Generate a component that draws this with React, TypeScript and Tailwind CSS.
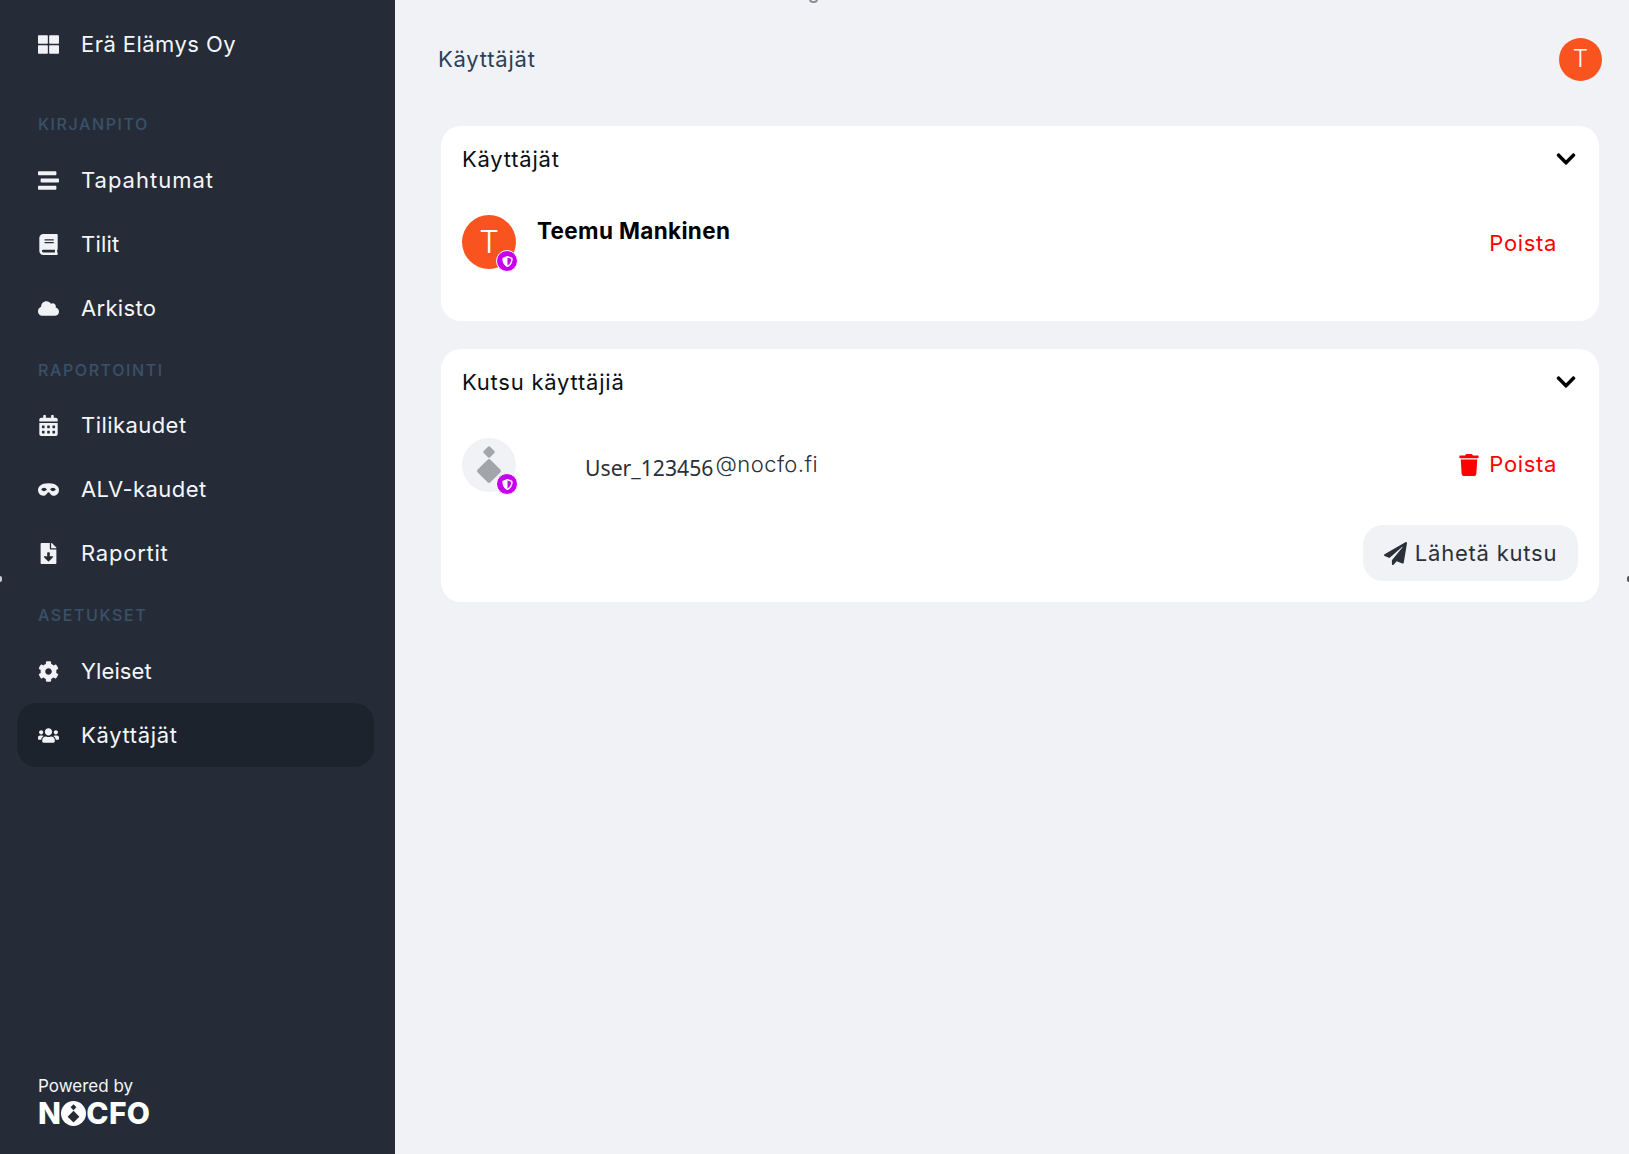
import React from "react";
import {
  FaThLarge, FaStream, FaBook, FaCloud, FaCalendarAlt, FaMask, FaFileDownload, FaCog, FaUsers,
  FaChevronDown, FaTrash, FaPaperPlane, FaShieldAlt,
} from "react-icons/fa";

const MONT = "font-['Inter','Noto_Sans',sans-serif]";

function NavRow({ icon: Icon, label, active, tracking = "tracking-[0.02em]" }: { icon: any; label: string; active?: boolean; tracking?: string }) {
  return (
    <div className={`flex h-16 items-center rounded-[20px] pl-[21px] ${active ? "bg-[#1d232c]" : ""}`}>
      <span className="flex w-[21px] justify-center text-[#f0f2f6]">
        <Icon className="h-[21px] w-[21px]" />
      </span>
      <span className={`ml-[22px] pt-[1px] text-[22px] ${tracking} text-[#f4f6f9]`}>{label}</span>
    </div>
  );
}

function SectionLabel({ children, top, bottom }: { children: React.ReactNode; top: string; bottom: string }) {
  return (
    <div className={`${top} ${bottom} flex h-5 items-center pl-[21px] text-[16px] font-medium tracking-[0.1em] text-[#3b5169]`}>
      {children}
    </div>
  );
}

function Badge() {
  return (
    <span className="absolute left-[34px] top-[35px] flex h-[22px] w-[22px] items-center justify-center rounded-full border border-white bg-[#c800f0] text-white">
      <FaShieldAlt className="h-[11px] w-[11px]" />
    </span>
  );
}

function Card({ title, children }: { title: string; children: React.ReactNode }) {
  return (
    <section className="rounded-[20px] bg-white px-[21px]">
      <div className="flex h-[66px] items-center justify-between">
        <h2 className="pt-[1px] text-[22px] tracking-[0.035em] text-[#0b0f14]">{title}</h2>
        <FaChevronDown className="mr-[1px] h-[22px] w-[22px] text-black" />
      </div>
      <div className="pt-[23px]">{children}</div>
    </section>
  );
}

export default function App() {
  return (
    <div className={`relative flex h-[1154px] w-[1629px] overflow-hidden bg-[#f0f2f6] ${MONT}`}>
      <aside className="flex w-[395px] shrink-0 flex-col bg-[#252c38] pl-[17px] pr-[21px] pt-3">
        <NavRow icon={FaThLarge} label="Erä Elämys Oy" />
        <SectionLabel top="mt-[38px]" bottom="mb-[14px]">KIRJANPITO</SectionLabel>
        <NavRow icon={FaStream} label="Tapahtumat" tracking="tracking-[0.045em]" />
        <NavRow icon={FaBook} label="Tilit" tracking="tracking-[0.01em]" />
        <NavRow icon={FaCloud} label="Arkisto" tracking="tracking-[0.015em]" />
        <SectionLabel top="mt-5" bottom="mb-[13px]">RAPORTOINTI</SectionLabel>
        <NavRow icon={FaCalendarAlt} label="Tilikaudet" />
        <NavRow icon={FaMask} label="ALV-kaudet" />
        <NavRow icon={FaFileDownload} label="Raportit" tracking="tracking-[0.035em]" />
        <SectionLabel top="mt-5" bottom="mb-[14px]">ASETUKSET</SectionLabel>
        <NavRow icon={FaCog} label="Yleiset" tracking="tracking-[0.005em]" />
        <NavRow icon={FaUsers} label="Käyttäjät" tracking="tracking-[0.03em]" active />
        <div className="mt-auto pb-[28px] pl-[21px] text-[#f4f6f9]">
          <div className="text-[17px] leading-[22px]">Powered by</div>
          <div className="mt-[3px] flex h-[26px] items-center text-[30px] font-extrabold leading-none tracking-[0.01em] text-white">
            <span>N</span>
            <svg viewBox="0 0 24 24" className="h-[25px] w-[25px]">
              <circle cx="12" cy="12" r="12" fill="#fff" />
              <rect x="10" y="4" width="4" height="4" transform="rotate(45 12 6)" fill="#252c38" />
              <rect x="8" y="11" width="8" height="8" transform="rotate(45 12 15)" fill="#252c38" />
            </svg>
            <span>CFO</span>
          </div>
        </div>
      </aside>

      <main className="min-w-0 flex-1 pl-[46px] pr-[30px]">
        <header className="-ml-[3px] -mr-[3px] mb-[7px] flex h-[119px] items-center justify-between">
          <h1 className="text-[22px] tracking-[0.035em] text-[#2c4058]">Käyttäjät</h1>
          <div className="-mt-[1px] flex h-[43px] w-[43px] items-center justify-center rounded-full bg-[#f9541f] text-[24px] font-light text-white">T</div>
        </header>

        <div className="flex flex-col gap-[28px]">
          <Card title="Käyttäjät">
            <div className="flex items-start pb-[52px]">
              <div className="relative h-[54px] w-[54px] shrink-0">
                <div className="flex h-full w-full items-center justify-center rounded-full bg-[#f9541f] text-[31px] font-light text-white">T</div>
                <Badge />
              </div>
              <div className="ml-[21px] pt-[3px] text-[22.5px] font-bold leading-[26px] tracking-[0.015em] text-black">Teemu Mankinen</div>
              <div className="ml-auto mr-[21px] pt-[15px] text-[22px] leading-[26px] tracking-[0.03em] text-[#ff0000]">Poista</div>
            </div>
          </Card>

          <Card title="Kutsu käyttäjiä">
            <div className="flex items-start">
              <div className="relative h-[54px] w-[54px] shrink-0">
                <div className="flex h-full w-full items-center justify-center rounded-full bg-[#f0f2f5]">
                  <svg viewBox="0 0 54 54" className="h-[54px] w-[54px]">
                    <rect x="22.5" y="9.5" width="9" height="9" rx="1.5" transform="rotate(45 27 14)" fill="#a2a6ab" />
                    <rect x="18" y="24" width="18" height="18" rx="2" transform="rotate(45 27 33)" fill="#a2a6ab" />
                  </svg>
                </div>
                <Badge />
              </div>
              <div className="ml-[69px] flex h-[54px] items-center text-[#2b3038]">
                <span className="pt-[5px] font-['Noto_Sans',sans-serif] text-[21.2px]">User_123456</span>
                <span className="ml-[2px] pb-[1px] text-[22px] font-light tracking-[0.02em]">@nocfo.fi</span>
              </div>
              <div className="ml-auto mr-[21px] flex h-[54px] items-center pb-[1px] text-[22px] tracking-[0.03em] text-[#ff0000]">
                <FaTrash className="mr-[10px] h-[22px] w-[20px]" />
                Poista
              </div>
            </div>
            <div className="flex justify-end pb-[21px] pt-[33px]">
              <button className="flex h-[56px] w-[215px] items-center justify-center gap-2 rounded-[20px] bg-[#f0f2f6] text-[22px] tracking-[0.035em] text-[#2b3038]">
                <FaPaperPlane className="h-[23px] w-[23px]" />
                Lähetä kutsu
              </button>
            </div>
          </Card>
        </div>
      </main>

      <span className="absolute left-0 top-[576px] h-[6px] w-[2px] rounded-r-full bg-[#c8ccd2]" />
      <span className="absolute right-0 top-[576px] h-[6px] w-[2px] rounded-l-full bg-[#555]" />
      <span className="absolute left-[809px] top-[-5px] h-[8px] w-[9px] rounded-full border-2 border-[#8a8d92]" />
    </div>
  );
}
